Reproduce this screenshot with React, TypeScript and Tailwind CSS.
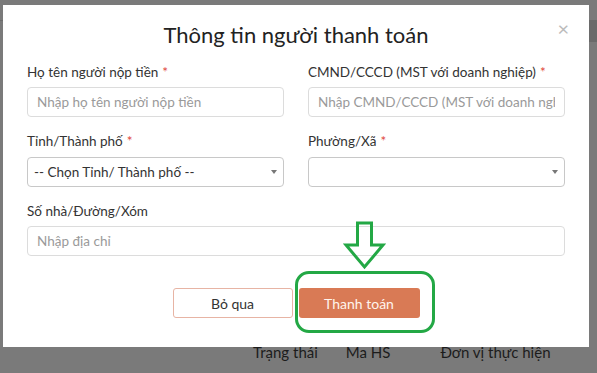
import React from "react";

const Req = () => <span className="text-[#e0443a] ml-[4px]">*</span>;

export default function App() {
  const font = { fontFamily: "Lato, 'Noto Sans', sans-serif" };
  return (
    <div className="relative w-[597px] h-[373px] overflow-hidden bg-[#7a7a7a]" style={font}>
      {/* background page */}
      <div className="absolute left-0 top-[20px] w-[597px] h-[1px] bg-[#6c6c6c]" />
      <div className="absolute left-[589px] top-[20px] w-[8px] h-[22px] bg-[#6a6a6a]" />
      <div className="absolute left-0 top-[341px] flex text-[15px] text-[#1c1c1c]">
        <span className="ml-[253px]">Trạng thái</span>
        <span className="ml-[28px]">Ma HS</span>
        <span className="ml-[50px] whitespace-nowrap">Đơn vị thực hiện</span>
      </div>

      {/* modal */}
      <div className="absolute left-[3px] top-[5px] w-[586px] h-[342px] bg-white flex flex-col px-[24px] pt-[15px]">
        <div className="h-[28px] flex items-center justify-center text-[22px] text-[#222]">
          Thông tin người thanh toán
        </div>
        <button className="absolute right-[20px] top-[13px] text-[20px] text-[#bbb] leading-none">×</button>

        <div className="grid grid-cols-2 gap-x-[24px] mt-[15px]">
          <div className="flex flex-col">
            <label className="h-[18px] flex items-center text-[13.5px] text-[#333]">Họ tên người nộp tiền<Req /></label>
            <input
              className="mt-[6px] h-[30px] border border-[#dcdcdc] rounded-[4px] px-[9px] text-[13.5px] text-[#333] placeholder:text-[#9a9a9a] outline-none"
              placeholder="Nhập họ tên người nộp tiền"
            />
          </div>
          <div className="flex flex-col">
            <label className="h-[18px] flex items-center text-[13.5px] text-[#333]">CMND/CCCD (MST với doanh nghiệp)<Req /></label>
            <input
              className="mt-[6px] h-[30px] border border-[#dcdcdc] rounded-[4px] px-[9px] text-[13.5px] text-[#333] placeholder:text-[#9a9a9a] outline-none"
              placeholder="Nhập CMND/CCCD (MST với doanh nghiệp)"
            />
          </div>

          <div className="flex flex-col mt-[15px]">
            <label className="h-[18px] flex items-center text-[13.5px] text-[#333]">Tỉnh/Thành phố<Req /></label>
            <div className="mt-[7px] h-[30px] border border-[#c8c8c8] rounded-[4px] pl-[6px] pr-[6px] flex items-center justify-between text-[13.5px] text-[#333]">
              <span>-- Chọn Tỉnh/ Thành phố --</span>
              <span className="w-0 h-0 border-l-[3px] border-r-[3px] border-t-[4px] border-l-transparent border-r-transparent border-t-[#777]" />
            </div>
          </div>
          <div className="flex flex-col mt-[15px]">
            <label className="h-[18px] flex items-center text-[13.5px] text-[#333]">Phường/Xã<Req /></label>
            <div className="mt-[7px] h-[30px] border border-[#c8c8c8] rounded-[4px] pl-[6px] pr-[6px] flex items-center justify-end">
              <span className="w-0 h-0 border-l-[3px] border-r-[3px] border-t-[4px] border-l-transparent border-r-transparent border-t-[#777]" />
            </div>
          </div>

          <div className="col-span-2 flex flex-col mt-[15px]">
            <label className="h-[18px] flex items-center text-[13.5px] text-[#333]">Số nhà/Đường/Xóm</label>
            <input
              className="mt-[6px] h-[30px] border border-[#dcdcdc] rounded-[4px] px-[9px] text-[13.5px] text-[#333] placeholder:text-[#9a9a9a] outline-none"
              placeholder="Nhập địa chỉ"
            />
          </div>
        </div>

        <div className="flex justify-center gap-[6px] mt-[32px]">
          <button className="w-[120px] h-[30px] border border-[#e7b4a4] rounded-[3px] text-[14px] text-[#333] bg-white">Bỏ qua</button>
          <button className="w-[121px] h-[30px] rounded-[3px] text-[14px] text-[#fff4ec] bg-[#d97a55]">Thanh toán</button>
        </div>

        {/* annotations */}
        <div className="absolute left-[292px] top-[266px] w-[140px] h-[62px] border-[3px] border-[#23a845] rounded-[14px] pointer-events-none" />
        <svg className="absolute left-[338px] top-[216px] pointer-events-none" width="46" height="50" viewBox="0 0 46 50">
          <path d="M16.5 2 H30.5 V24 H42 L23.5 46 L5 24 H16.5 Z" fill="none" stroke="#23a845" strokeWidth="3" strokeLinejoin="miter" />
        </svg>
      </div>
    </div>
  );
}
